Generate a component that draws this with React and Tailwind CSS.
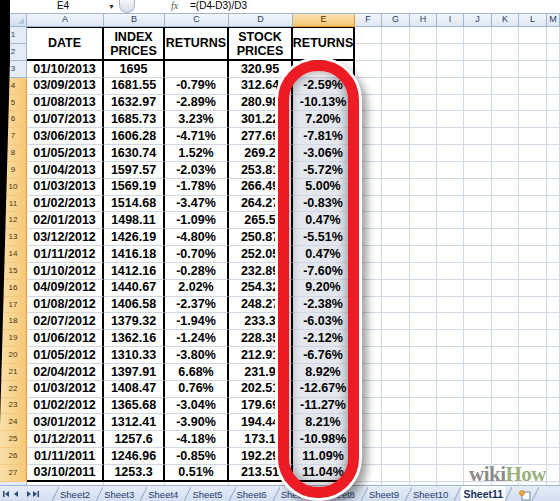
import React from "react";

// sheet data: A..E for rows 3-27
const data = [
  ["01/10/2013", "1695", "", "320.95", ""],
  ["03/09/2013", "1681.55", "-0.79%", "312.64", "-2.59%"],
  ["01/08/2013", "1632.97", "-2.89%", "280.98", "-10.13%"],
  ["01/07/2013", "1685.73", "3.23%", "301.22", "7.20%"],
  ["03/06/2013", "1606.28", "-4.71%", "277.69", "-7.81%"],
  ["01/05/2013", "1630.74", "1.52%", "269.2", "-3.06%"],
  ["01/04/2013", "1597.57", "-2.03%", "253.81", "-5.72%"],
  ["01/03/2013", "1569.19", "-1.78%", "266.49", "5.00%"],
  ["01/02/2013", "1514.68", "-3.47%", "264.27", "-0.83%"],
  ["02/01/2013", "1498.11", "-1.09%", "265.5", "0.47%"],
  ["03/12/2012", "1426.19", "-4.80%", "250.87", "-5.51%"],
  ["01/11/2012", "1416.18", "-0.70%", "252.05", "0.47%"],
  ["01/10/2012", "1412.16", "-0.28%", "232.89", "-7.60%"],
  ["04/09/2012", "1440.67", "2.02%", "254.32", "9.20%"],
  ["01/08/2012", "1406.58", "-2.37%", "248.27", "-2.38%"],
  ["02/07/2012", "1379.32", "-1.94%", "233.3", "-6.03%"],
  ["01/06/2012", "1362.16", "-1.24%", "228.35", "-2.12%"],
  ["01/05/2012", "1310.33", "-3.80%", "212.91", "-6.76%"],
  ["02/04/2012", "1397.91", "6.68%", "231.9", "8.92%"],
  ["01/03/2012", "1408.47", "0.76%", "202.51", "-12.67%"],
  ["01/02/2012", "1365.68", "-3.04%", "179.69", "-11.27%"],
  ["03/01/2012", "1312.41", "-3.90%", "194.44", "8.21%"],
  ["01/12/2011", "1257.6", "-4.18%", "173.1", "-10.98%"],
  ["01/11/2011", "1246.96", "-0.85%", "192.29", "11.09%"],
  ["03/10/2011", "1253.3", "0.51%", "213.51", "11.04%"],
];

const letters = ["A", "B", "C", "D", "E", "F", "G", "H", "I", "J", "K", "L", "M"];
const tabs = ["Sheet2", "Sheet3", "Sheet4", "Sheet5", "Sheet6", "Sheet7", "Sheet8", "Sheet9", "Sheet10"];

const colHead = "flex items-center justify-center border-r border-b border-[#9eb6ce] text-[9px] text-[#27415f] bg-linear-to-b from-[#f3f6fb] to-[#dce6f4]";
const colHeadSel = "flex items-center justify-center border-r border-b border-[#f29536] text-[9px] text-[#4a3510] bg-linear-to-b from-[#fbe3b4] to-[#f5c56c]";
const rowHead = "flex items-center justify-center border-r border-b border-[#9eb6ce] text-[8px] text-[#27415f] bg-[#e4ecf7]";
const rowHeadSel = "flex items-center justify-center border-r border-b border-r-[#f29536] border-b-[#f6c77e] text-[8px] text-[#4a3510] bg-linear-to-r from-[#fbe0a8] to-[#f6c877]";
const blank = "border-r border-b border-[#d0d7e5] bg-white";
const cell = "flex items-center justify-center border-r-2 border-r-black border-b border-b-[#d0d7e5] text-[12.5px] font-bold text-black leading-none whitespace-nowrap";

const Empty = ({ n }) =>
  Array.from({ length: n }).map((_, i) => <div key={"e" + i} className={blank} />);

const Slash = () => (
  <svg width="7" height="14" viewBox="0 0 7 14" className="shrink-0">
    <line x1="0" y1="14" x2="7" y2="0" stroke="#8ea5c8" strokeWidth="1" />
  </svg>
);

const App = () => {
  return (
    <div
      className="relative w-[560px] h-[501px] overflow-hidden bg-white"
      style={{ fontFamily: '"Liberation Sans", Arial, sans-serif' }}
    >
      {/* formula bar */}
      <div className="flex items-end h-[14px] border-b border-[#9eb6ce] bg-white text-[10px] leading-none text-black">
        <div className="w-[108px] pl-[10px] flex justify-center pb-[2px]">
          <span className="ml-[8px]">E4</span>
        </div>
        <span className="text-[7px] text-[#333] pb-[3px]">▼</span>
        <div className="ml-[4px] w-[16px] h-[13px] rounded-b-full border border-t-0 border-[#aab6c8] bg-linear-to-b from-[#f4f6fa] to-[#d5dce8]" />
        <div className="flex-1" />
        <span
          className="w-[19px] italic text-[10px] text-[#555] pb-[2px]"
          style={{ fontFamily: '"Liberation Serif", serif' }}
        >
          fx
        </span>
        <span className="w-[370px] pb-[2px]">=(D4-D3)/D3</span>
      </div>

      {/* grid */}
      <div className="grid h-[471px] grid-cols-[27px_77px_61px_64px_64px_62px_27px_28px_27px_27px_28px_27px_28px_1fr] grid-rows-[13px_17px_17px_repeat(25,16.84px)_1fr]">
        {/* column header row */}
        <div className="relative border-r border-b border-[#9eb6ce] bg-linear-to-b from-[#e9eff8] to-[#d3dfef]">
          <div className="absolute right-[2px] bottom-[2px] w-0 h-0 border-l-[6px] border-l-transparent border-b-[6px] border-b-[#b5c6dc]" />
        </div>
        {letters.map((l) => (
          <div key={l} className={l === "E" ? colHeadSel : colHead}>
            {l}
          </div>
        ))}

        {/* row 1 */}
        <div className={rowHead}>1</div>
        <div className={cell + " row-span-2 border-t border-t-black border-b-2 border-b-black"}>DATE</div>
        <div className={cell + " border-t border-t-black border-b-0 items-end pb-[1px]"}>INDEX</div>
        <div className={cell + " row-span-2 border-t border-t-black border-b-2 border-b-black"}>RETURNS</div>
        <div className={cell + " border-t border-t-black border-b-0 items-end pb-[1px]"}>STOCK</div>
        <div className={cell + " row-span-2 border-t border-t-black border-b-2 border-b-black"}>RETURNS</div>
        <Empty n={8} />

        {/* row 2 */}
        <div className={rowHead}>2</div>
        <div className={cell + " border-b-2 border-b-black items-start pt-[1px]"}>PRICES</div>
        <div className={cell + " border-b-2 border-b-black items-start pt-[1px]"}>PRICES</div>
        <Empty n={8} />

        {/* data rows */}
        {data.map((r, i) => {
          const n = i + 3;
          const last = n === 27;
          const bottom = last ? " border-b-2 border-b-black" : "";
          return (
            <React.Fragment key={n}>
              <div className={n >= 4 ? rowHeadSel : rowHead}>{n}</div>
              {r.map((v, j) => (
                <div
                  key={j}
                  className={cell + bottom + (j === 4 && n >= 4 ? " bg-[#e4e7ee]" : "")}
                >
                  {v}
                </div>
              ))}
              <Empty n={8} />
            </React.Fragment>
          );
        })}

        {/* partial row 28 */}
        <div className="border-r border-[#9eb6ce] bg-[#e4ecf7]" />
        {letters.map((l) => (
          <div key={"r28" + l} className="border-r border-[#d0d7e5]" />
        ))}
      </div>

      {/* sheet tabs */}
      <div className="flex items-end h-[16px] border-t border-[#9eb6ce] bg-linear-to-b from-[#e6edf7] to-[#d2deef] text-[9.5px] text-[#1f3b6e]">
        <div className="flex items-center w-[45px] h-[15px] pl-[3px]">
          <svg width="36" height="8" viewBox="0 0 36 8">
            <rect x="0" y="1" width="1.5" height="6" fill="#2c4a7c" />
            <polygon points="2,4 6,1 6,7" fill="#2c4a7c" />
            <polygon points="11,4 15,1 15,7" fill="#2c4a7c" />
            <polygon points="24,1 28,4 24,7" fill="#2c4a7c" />
            <polygon points="30,1 34,4 30,7" fill="#2c4a7c" />
            <rect x="34.5" y="1" width="1.5" height="6" fill="#2c4a7c" />
          </svg>
        </div>
        <div className="w-[7px]" />
        {tabs.map((t) => (
          <div key={t} className="flex items-end h-[15px]">
            <Slash />
            <span className="pl-[1px] pr-[6px] pb-[2px] leading-none">{t}</span>
          </div>
        ))}
        <div className="flex items-end h-[16px]">
          <Slash />
          <span className="bg-white px-[2px] pb-[2px] font-bold text-[10.5px] leading-none text-[#142f5e] h-[15px] flex items-end">
            Sheet11
          </span>
          <Slash />
        </div>
        <div className="flex items-end h-[15px] ml-[6px]">
          <svg width="14" height="12" viewBox="0 0 14 12">
            <rect x="4" y="3" width="8" height="8" fill="#fff" stroke="#6d86ad" strokeWidth="1" />
            <circle cx="4" cy="4" r="2.6" fill="#f2a93b" stroke="#c77a12" strokeWidth="0.6" />
          </svg>
          <Slash />
        </div>
      </div>

      {/* black scan edge */}
      <div
        className="absolute left-0 top-0 w-[10px] h-[501px] bg-black pointer-events-none"
        style={{ clipPath: "polygon(0 0, 100% 0, 100% 12%, 0 85%)" }}
      />

      {/* red highlight ring */}
      <div className="absolute left-[278px] top-[60px] w-[81px] h-[438px] rounded-[40px] border-[11px] border-[#ed1c24] pointer-events-none shadow-[0_0_0_3px_#ffffff,5px_6px_9px_3px_rgba(0,0,0,0.38),inset_0_0_9px_3px_rgba(0,0,0,0.28)]" />

      {/* watermark */}
      <div
        className="absolute left-[469px] top-[459px] text-[21px] font-bold tracking-[-0.5px] pointer-events-none"
        style={{ fontFamily: '"Liberation Serif", serif', textShadow: "0 0 2px #fff, 0 0 2px #fff" }}
      >
        <span className="text-[#8b8b8b]">wiki</span>
        <span className="text-[#9cb07c]">How</span>
      </div>
    </div>
  );
};

export default App;
